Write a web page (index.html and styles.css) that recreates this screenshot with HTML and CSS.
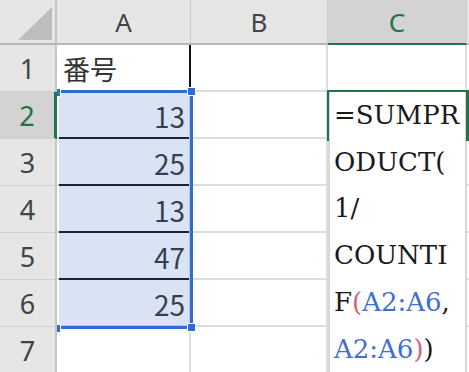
FILE: index.html
```html
<!DOCTYPE html>
<html lang="ja">
<head>
<meta charset="utf-8">
<link rel="stylesheet" href="styles.css">
</head>
<body>
<div class="sheet">
  <div class="corner"><svg class="tri" width="57" height="45" viewBox="0 0 57 45"><polygon points="52,7 52,40 18,40" fill="#bdbdbd"/></svg></div>
  <div class="ch">A</div>
  <div class="ch">B</div>
  <div class="ch ch-sel">C</div>
  <div class="ch ch-end"></div>

  <div class="rh">1</div>
  <div class="cell txt a1">番号</div>
  <div class="cell"></div>
  <div class="cell"></div>
  <div class="cell end"></div>

  <div class="rh rh-sel">2</div>
  <div class="cell num inner">13</div>
  <div class="cell"></div>
  <div class="cell"></div>
  <div class="cell end"></div>

  <div class="rh">3</div>
  <div class="cell num inner">25</div>
  <div class="cell"></div>
  <div class="cell"></div>
  <div class="cell end"></div>

  <div class="rh">4</div>
  <div class="cell num inner">13</div>
  <div class="cell"></div>
  <div class="cell"></div>
  <div class="cell end"></div>

  <div class="rh">5</div>
  <div class="cell num inner">47</div>
  <div class="cell"></div>
  <div class="cell"></div>
  <div class="cell end"></div>

  <div class="rh">6</div>
  <div class="cell num">25</div>
  <div class="cell"></div>
  <div class="cell"></div>
  <div class="cell end"></div>

  <div class="rh">7</div>
  <div class="cell"></div>
  <div class="cell"></div>
  <div class="cell"></div>
  <div class="cell end"></div>

  <div class="sel"></div>
  <div class="hd hd-tl"></div>
  <div class="hd hd-bl"></div>
  <div class="hd hd-tr"></div>
  <div class="hd hd-br"></div>

  <div class="edit">
    <div class="ln">=SUMPR</div>
    <div class="ln">ODUCT(</div>
    <div class="ln">1/</div>
    <div class="ln">COUNTI</div>
    <div class="ln">F<span class="par">(</span><span class="ref">A2:A6</span>,</div>
    <div class="ln"><span class="ref">A2:A6</span><span class="par">)</span>)</div>
  </div>
  <div class="active"></div>
</div>
</body>
</html>
```
FILE: styles.css
```css
html, body {
  margin: 0;
  padding: 0;
  background: #fff;
}
.sheet {
  position: relative;
  width: 469px;
  height: 372px;
  overflow: hidden;
  display: grid;
  grid-template-columns: 57px 134px 137px 139px 2px;
  grid-template-rows: 45px repeat(7, 47px);
}
.corner {
  background: #e6e6e6;
  border-right: 2px solid #c4c4c4;
  border-bottom: 2px solid #b6b6b6;
  box-sizing: border-box;
  position: relative;
}
.tri {
  position: absolute;
  left: 0;
  top: 0;
}
.ch {
  background: #e6e6e6;
  border-right: 1px solid #cdcdcd;
  border-bottom: 2px solid #b6b6b6;
  box-sizing: border-box;
  display: flex;
  align-items: center;
  justify-content: center;
  font-family: "Noto Sans", "DejaVu Sans", sans-serif;
  font-size: 26px;
  color: #444;
  padding-top: 1px;
}
.ch-sel {
  background: #d3d3d3;
  color: #217346;
  border-bottom: 2px solid #217346;
}
.ch-end {
  border-right: none;
}
.rh {
  background: #e6e6e6;
  border-right: 2px solid #c4c4c4;
  border-bottom: 1px solid #d0d0d0;
  box-sizing: border-box;
  display: flex;
  align-items: center;
  justify-content: center;
  font-family: "Noto Sans", "DejaVu Sans", sans-serif;
  font-size: 27px;
  color: #444;
}
.rh-sel {
  background: #d3d3d3;
  color: #217346;
  border-right: 3px solid #217346;
}
.cell {
  background: #fff;
  border-right: 2px solid #dcdcdc;
  border-bottom: 2px solid #dcdcdc;
  box-sizing: border-box;
  display: flex;
  align-items: center;
  font-family: "Noto Sans CJK JP", "Noto Sans", sans-serif;
  color: #333;
}
.cell.end {
  border-right: none;
}
.txt {
  font-size: 27px;
  padding-left: 6px;
  padding-top: 1px;
}
.a1 {
  border-right: 2px solid #111;
}
.num {
  font-size: 28px;
  justify-content: flex-end;
  padding-right: 4px;
  padding-top: 2px;
}
.inner {
  position: relative;
}
.inner::after {
  content: "";
  position: absolute;
  left: 2px;
  right: 0;
  bottom: -2px;
  height: 2px;
  background: #0a0f18;
}
.sel {
  position: absolute;
  left: 59px;
  top: 90px;
  width: 134px;
  height: 239px;
  box-sizing: border-box;
  border: 3px solid #2f6bd2;
  border-left: none;
  background: rgba(68, 114, 196, 0.2);
}
.hd {
  position: absolute;
  width: 7px;
  height: 7px;
  background: #2f6bd2;
  border: 1px solid #fff;
}
.hd-tr {
  left: 187px;
  top: 87px;
}
.hd-br {
  left: 187px;
  top: 323px;
}
.hd-tl {
  left: 57px;
  top: 88px;
  width: 3px;
  border-left: none;
}
.hd-bl {
  left: 57px;
  top: 324px;
  width: 3px;
  border-left: none;
}
.edit {
  position: absolute;
  left: 328px;
  top: 92px;
  width: 139px;
  bottom: 0;
  box-sizing: border-box;
  background: #fff;
  border-left: 2px solid #d8d8d8;
  border-right: 2px solid #d8d8d8;
  padding-left: 4px;
  font-family: "DejaVu Serif", "Liberation Serif", serif;
  font-size: 26px;
  line-height: 46.7px;
  color: #1a1a1a;
}
.ln {
  white-space: nowrap;
}
.ref {
  color: #3f6fd1;
}
.par {
  color: #d8607c;
}
.active {
  position: absolute;
  left: 327px;
  top: 90px;
  width: 142px;
  height: 51px;
  box-sizing: border-box;
  border-style: solid;
  border-color: #217346;
  border-width: 2px 3px 0 2px;
}
```
